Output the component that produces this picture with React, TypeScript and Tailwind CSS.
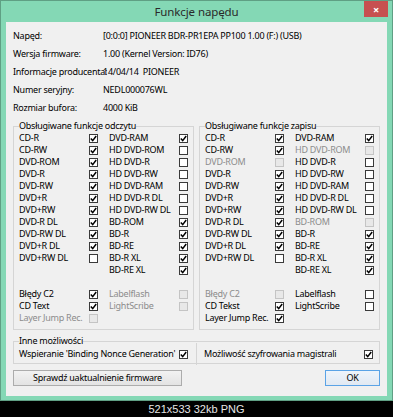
const info = [
  ["Napęd:", "[0:0:0] PIONEER BDR-PR1EPA PP100 1.00 (F:) (USB)"],
  ["Wersja firmware:", "1.00 (Kernel Version: ID76)"],
  ["Informacje producenta:", "14/04/14  PIONEER"],
  ["Numer seryjny:", "NEDL000076WL"],
  ["Rozmiar bufora:", "4000 KiB"],
];

type Item = { label: string; checked: boolean; disabled?: boolean } | null;

const readRows: [Item, Item][] = [
  [{ label: "CD-R", checked: true }, { label: "DVD-RAM", checked: true }],
  [{ label: "CD-RW", checked: true }, { label: "HD DVD-ROM", checked: false }],
  [{ label: "DVD-ROM", checked: true }, { label: "HD DVD-R", checked: false }],
  [{ label: "DVD-R", checked: true }, { label: "HD DVD-RW", checked: false }],
  [{ label: "DVD-RW", checked: true }, { label: "HD DVD-RAM", checked: false }],
  [{ label: "DVD+R", checked: true }, { label: "HD DVD-R DL", checked: false }],
  [{ label: "DVD+RW", checked: true }, { label: "HD DVD-RW DL", checked: false }],
  [{ label: "DVD-R DL", checked: true }, { label: "BD-ROM", checked: true }],
  [{ label: "DVD-RW DL", checked: true }, { label: "BD-R", checked: true }],
  [{ label: "DVD+R DL", checked: true }, { label: "BD-RE", checked: true }],
  [{ label: "DVD+RW DL", checked: false }, { label: "BD-R XL", checked: true }],
  [null, { label: "BD-RE XL", checked: true }],
  [null, null],
  [{ label: "Błędy C2", checked: true }, { label: "Labelflash", checked: false, disabled: true }],
  [{ label: "CD Text", checked: true }, { label: "LightScribe", checked: false, disabled: true }],
  [{ label: "Layer Jump Rec.", checked: false, disabled: true }, null],
];

const writeRows: [Item, Item][] = [
  [{ label: "CD-R", checked: true }, { label: "DVD-RAM", checked: true }],
  [{ label: "CD-RW", checked: true }, { label: "HD DVD-ROM", checked: false, disabled: true }],
  [{ label: "DVD-ROM", checked: false, disabled: true }, { label: "HD DVD-R", checked: false }],
  [{ label: "DVD-R", checked: true }, { label: "HD DVD-RW", checked: false }],
  [{ label: "DVD-RW", checked: true }, { label: "HD DVD-RAM", checked: false }],
  [{ label: "DVD+R", checked: true }, { label: "HD DVD-R DL", checked: false }],
  [{ label: "DVD+RW", checked: true }, { label: "HD DVD-RW DL", checked: false }],
  [{ label: "DVD-R DL", checked: true }, { label: "BD-ROM", checked: false, disabled: true }],
  [{ label: "DVD-RW DL", checked: true }, { label: "BD-R", checked: true }],
  [{ label: "DVD+R DL", checked: true }, { label: "BD-RE", checked: true }],
  [{ label: "DVD+RW DL", checked: false }, { label: "BD-R XL", checked: true }],
  [null, { label: "BD-RE XL", checked: true }],
  [null, null],
  [{ label: "Błędy C2", checked: false, disabled: true }, { label: "Labelflash", checked: false }],
  [{ label: "CD Tekst", checked: true }, { label: "LightScribe", checked: false }],
  [{ label: "Layer Jump Rec.", checked: true }, null],
];

const Check = ({ checked, disabled }: { checked: boolean; disabled?: boolean }) => (
  <span
    className={`flex h-[9px] w-[9px] shrink-0 items-center justify-center border ${
      disabled ? "border-[#c4c4c4] bg-[#e8e8e8]" : "border-[#3a3a3a] bg-white"
    }`}
  >
    {checked && (
      <svg viewBox="0 0 7 7" className="h-[7px] w-[7px]">
        <path d="M0.8 3.6 L2.7 5.6 L6.2 1" fill="none" stroke="#000" strokeWidth="1.5" />
      </svg>
    )}
  </span>
);

const Cell = ({ item, first }: { item: Item; first?: boolean }) => (
  <div className={`flex items-center ${first ? "" : "ml-[11px]"}`}>
    <span
      className={`w-[70px] whitespace-nowrap ${item?.disabled ? "text-[#8c8c8c]" : "text-black"}`}
    >
      {item?.label}
    </span>
    {item ? <Check checked={item.checked} disabled={item.disabled} /> : <span className="w-[9px]" />}
  </div>
);

const Group = ({ title, rows }: { title: string; rows: [Item, Item][] }) => (
  <fieldset className="w-[181px] border border-[#d5d5d5] px-[5px] pb-[5px]">
    <legend className="leading-[12px]">{title}</legend>
    {rows.map((r, i) => (
      <div key={i} className="flex h-[12px] items-center leading-[12px]">
        <Cell item={r[0]} first />
        <Cell item={r[1]} />
      </div>
    ))}
  </fieldset>
);

const App = () => {
  return (
    <div className="flex h-[417px] w-[393px] flex-col bg-black font-['Noto_Sans',sans-serif]">
      <div className="h-[401px] border border-[#5f9f84] bg-[#84d8b5]">
        <div className="relative flex h-[21px] items-center justify-center text-[11.5px] tracking-[-0.1px] text-[#2a2a2a]">
          Funkcje napędu
          <div className="absolute right-[4px] top-0 flex h-[16px] w-[24px] items-center justify-center bg-[#c75050] text-[11px] font-bold leading-none text-white">
            ×
          </div>
        </div>
        <div className="mx-[5px] flex h-[374px] flex-col bg-[#f0f0f0] px-[7px] pt-[5px] text-[9px] tracking-[-0.25px] text-black">
          <div className="grid grid-cols-[90px_1fr]">
            {info.map(([k, v]) => (
              <div key={k} className="contents">
                <span className="flex h-[18px] items-center whitespace-nowrap">{k}</span>
                <span className="flex h-[18px] items-center whitespace-pre">{v}</span>
              </div>
            ))}
          </div>
          <div className="mt-[3px] flex gap-[5px]">
            <Group title="Obsługiwane funkcje odczytu" rows={readRows} />
            <Group title="Obsługiwane funkcje zapisu" rows={writeRows} />
          </div>
          <fieldset className="mt-[5px] w-[367px] border border-[#d5d5d5] px-[5px] pb-[2px]">
            <legend className="leading-[12px]">Inne możliwości</legend>
            <div className="flex h-[14px] items-center">
              <span className="w-[160px] whitespace-nowrap">Wspieranie 'Binding Nonce Generation'</span>
              <Check checked />
              <span className="ml-[8px] h-[22px] w-px bg-[#d5d5d5]" />
              <span className="ml-[7px] w-[160px] whitespace-nowrap">Możliwość szyfrowania magistrali</span>
              <Check checked />
            </div>
          </fieldset>
          <div className="mt-[6px] flex w-[367px] justify-between">
            <button className="flex h-[16px] w-[169px] items-center justify-center border border-[#acacac] bg-gradient-to-b from-[#f2f2f2] to-[#e3e3e3]">
              Sprawdź uaktualnienie firmware
            </button>
            <button className="flex h-[16px] w-[55px] items-center justify-center border border-[#5aa3e6] bg-gradient-to-b from-[#eef4fb] to-[#e1e9f2]">
              OK
            </button>
          </div>
        </div>
      </div>
      <div className="flex h-[16px] items-center justify-center font-['Liberation_Sans',sans-serif] text-[11px] text-[#e6e6e6]">
        521x533 32kb PNG
      </div>
    </div>
  );
};

export default App;
